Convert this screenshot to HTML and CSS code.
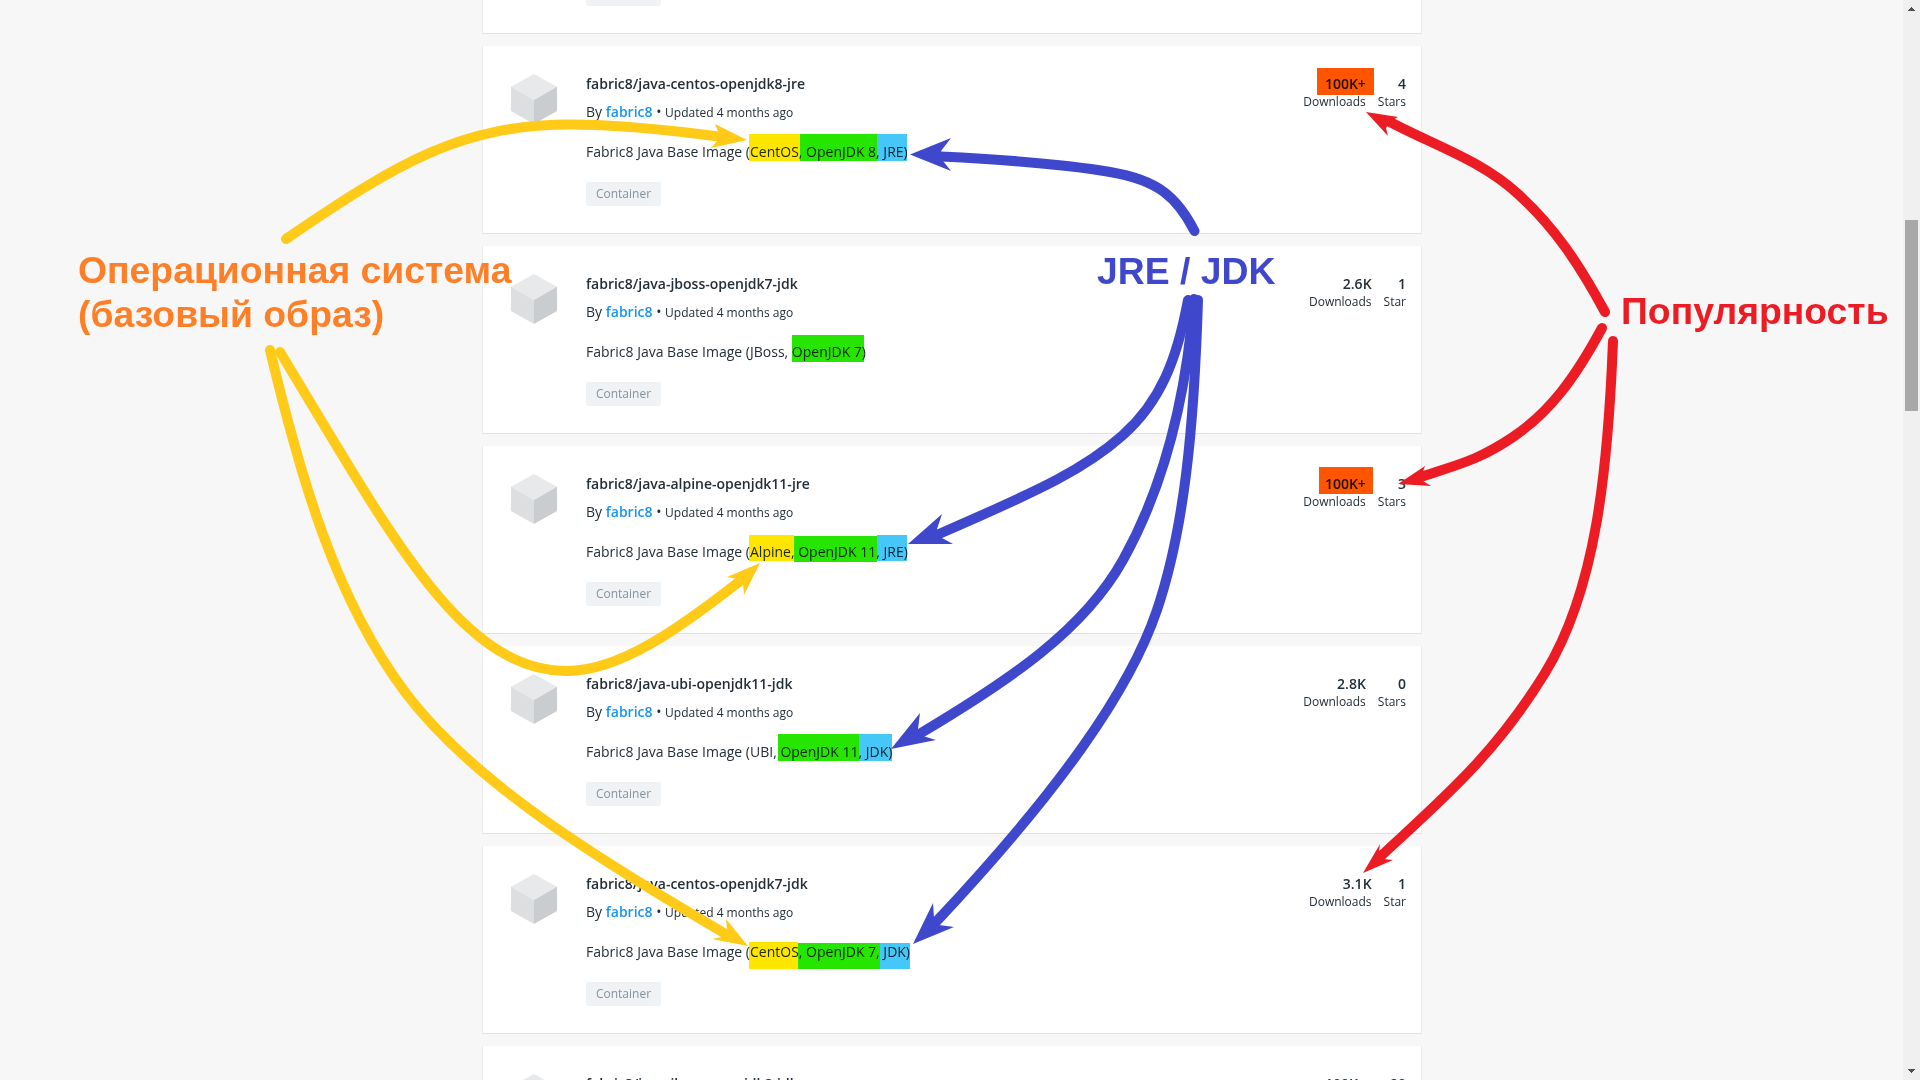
FILE: index.html
```html
<!DOCTYPE html>
<html lang="ru">
<head>
<meta charset="utf-8">
<title>fabric8 java images</title>
<link rel="stylesheet" href="styles.css">
</head>
<body>
<svg width="0" height="0" class="defs">
  <symbol id="cube" viewBox="0 0 46 50">
    <path d="M23 0 46 12.7 23 26 0 12.7z" fill="#e8e9eb"/>
    <path d="M0 12.7 23 26V50L0 37z" fill="#dcdee0"/>
    <path d="M46 12.7 23 26V50L46 37z" fill="#cacdd0"/>
  </symbol>
</svg>
<div class="page">
  <main class="results">
    <article class="card card-end">
      <span class="tag"></span>
    </article>
    <article class="card">
      <svg class="cube"><use href="#cube"/></svg>
      <div class="info">
        <h2 class="title">fabric8/java-centos-openjdk8-jre</h2>
        <p class="by">By <a class="owner">fabric8</a> • <span class="updated">Updated 4 months ago</span></p>
        <p class="desc">Fabric8 Java Base Image (CentOS, OpenJDK 8, JRE)</p>
        <span class="tag">Container</span>
      </div>
      <div class="stats">
        <div class="stat"><b>100K+</b><span>Downloads</span></div>
        <div class="stat"><b>4</b><span>Stars</span></div>
      </div>
    </article>
    <article class="card">
      <svg class="cube"><use href="#cube"/></svg>
      <div class="info">
        <h2 class="title">fabric8/java-jboss-openjdk7-jdk</h2>
        <p class="by">By <a class="owner">fabric8</a> • <span class="updated">Updated 4 months ago</span></p>
        <p class="desc">Fabric8 Java Base Image (JBoss, OpenJDK 7)</p>
        <span class="tag">Container</span>
      </div>
      <div class="stats">
        <div class="stat"><b>2.6K</b><span>Downloads</span></div>
        <div class="stat"><b>1</b><span>Star</span></div>
      </div>
    </article>
    <article class="card">
      <svg class="cube"><use href="#cube"/></svg>
      <div class="info">
        <h2 class="title">fabric8/java-alpine-openjdk11-jre</h2>
        <p class="by">By <a class="owner">fabric8</a> • <span class="updated">Updated 4 months ago</span></p>
        <p class="desc">Fabric8 Java Base Image (Alpine, OpenJDK 11, JRE)</p>
        <span class="tag">Container</span>
      </div>
      <div class="stats">
        <div class="stat"><b>100K+</b><span>Downloads</span></div>
        <div class="stat"><b>3</b><span>Stars</span></div>
      </div>
    </article>
    <article class="card">
      <svg class="cube"><use href="#cube"/></svg>
      <div class="info">
        <h2 class="title">fabric8/java-ubi-openjdk11-jdk</h2>
        <p class="by">By <a class="owner">fabric8</a> • <span class="updated">Updated 4 months ago</span></p>
        <p class="desc">Fabric8 Java Base Image (UBI, OpenJDK 11, JDK)</p>
        <span class="tag">Container</span>
      </div>
      <div class="stats">
        <div class="stat"><b>2.8K</b><span>Downloads</span></div>
        <div class="stat"><b>0</b><span>Stars</span></div>
      </div>
    </article>
    <article class="card">
      <svg class="cube"><use href="#cube"/></svg>
      <div class="info">
        <h2 class="title">fabric8/java-centos-openjdk7-jdk</h2>
        <p class="by">By <a class="owner">fabric8</a> • <span class="updated">Updated 4 months ago</span></p>
        <p class="desc">Fabric8 Java Base Image (CentOS, OpenJDK 7, JDK)</p>
        <span class="tag">Container</span>
      </div>
      <div class="stats">
        <div class="stat"><b>3.1K</b><span>Downloads</span></div>
        <div class="stat"><b>1</b><span>Star</span></div>
      </div>
    </article>
    <article class="card">
      <svg class="cube"><use href="#cube"/></svg>
      <div class="info">
        <h2 class="title">fabric8/java-jboss-openjdk8-jdk</h2>
      </div>
      <div class="stats">
        <div class="stat"><b>100K+</b><span>Downloads</span></div>
        <div class="stat"><b>29</b><span>Stars</span></div>
      </div>
    </article>
  </main>
  <div class="scrollbar">
    <svg class="arrow" width="7" height="4" shape-rendering="crispEdges"><path d="M3 0h1v1h1v1h1v1h1v1H0V3h1V2h1V1h1z"/></svg>
    <div class="thumb"></div>
    <svg class="arrow" width="7" height="4" shape-rendering="crispEdges"><path d="M0 0h7v1H6v1H5v1H4v1H3V3H2V2H1V1H0z"/></svg>
  </div>
</div>

<svg class="overlay marks" viewBox="0 0 1920 1080">
  <g fill="#ffe600">
    <rect x="749" y="134" width="51" height="27"/>
    <rect x="749" y="535" width="45" height="26"/>
    <rect x="749" y="942" width="49" height="27"/>
  </g>
  <g fill="#26e600">
    <rect x="800" y="134" width="77" height="27"/>
    <rect x="792" y="335" width="72" height="27"/>
    <rect x="794" y="536" width="83" height="26"/>
    <rect x="778" y="734" width="81" height="27"/>
    <rect x="798" y="943" width="82" height="26"/>
  </g>
  <g fill="#45c8f7">
    <rect x="877" y="134" width="30" height="27"/>
    <rect x="877" y="535" width="30" height="26"/>
    <rect x="859" y="734" width="33" height="27"/>
    <rect x="880" y="943" width="30" height="26"/>
  </g>
  <g fill="#ff5500">
    <rect x="1317" y="68" width="57" height="27"/>
    <rect x="1319" y="467" width="54" height="27"/>
  </g>
</svg>

<svg class="overlay" viewBox="0 0 1920 1080">
  <g class="yellow">
    <path class="line" d="M286 239C400 161 462 125 570 124.500C620 124.500 670 130 722 137"/>
    <path class="head" d="M747 140 715 124 719 134 720 138 711 148z"/>
    <path class="line" d="M280 352C391 535 461 671 567 671C620 671 680 628 740 581"/>
    <path class="head" d="M760 563 727 577 738 579 743 584 744 595z"/>
    <path class="line" d="M270 350C301 480 336 600 405 692C471 780 591 855 724 933"/>
    <path class="head" d="M748 946 726 919 727 929 722 937 712 939z"/>
  </g>
  <g class="blue">
    <path class="line" d="M1194.500 231C1177 197 1158 180 1110 172C1065 164 1010 160 941 156.500"/>
    <path class="head" d="M910 154.500 951 138 941 151 943 161 951 171z"/>
    <path class="line" d="M1188 300C1177 360 1160 402 1123 435S1045 488 939 534"/>
    <path class="head" d="M908 544 942 514 937 529 942 538 953 544z"/>
    <path class="line" d="M1194 299C1186 400 1162 490 1123 560C1084 630 1010 680 921 733"/>
    <path class="head" d="M891 749 920 713 918 729 923 736 936 740z"/>
    <path class="line" d="M1198 300C1194 430 1184 530 1157 610S1060 790 935 923"/>
    <path class="head" d="M913 944 933 903 934 918 939 925 954 927z"/>
  </g>
  <g class="red">
    <path class="line" d="M1605 312C1578 262 1554 227 1518 194S1440 148 1390 122"/>
    <path class="head" d="M1366 112 1398 117 1391 121 1386 128 1388 136z"/>
    <path class="line" d="M1602 328C1575 378 1550 412 1513 437S1455 465 1421 477"/>
    <path class="head" d="M1398 484 1425 466 1422 474 1423 481 1431 486z"/>
    <path class="line" d="M1613 341C1608 470 1596 590 1545 673S1441 800 1381 856"/>
    <path class="head" d="M1363 873 1380 844 1379 852 1384 859 1393 860z"/>
  </g>
</svg>

<div class="note os">Операционная система<br>(базовый образ)</div>
<div class="note jdk">JRE / JDK</div>
<div class="note pop">Популярность</div>
</body>
</html>
```
FILE: styles.css
```css
* { box-sizing: border-box; }
body {
  margin: 0;
  height: 1080px;
  overflow: hidden;
  position: relative;
  background: #f7f7f7;
  color: #222f38;
  font-family: "Open Sans", "Noto Sans", sans-serif;
}
.defs { position: absolute; }
.page {
  display: flex;
  height: 1080px;
  overflow: hidden;
}
.results {
  display: flex;
  flex-direction: column;
  gap: 12px;
  width: 940px;
  margin: 0 auto 0 482px;
}
.card {
  display: flex;
  flex: none;
  height: 188px;
  padding: 28px 15px 0 28px;
  background: #fff;
  border: 1px solid #ebecee;
  border-top: 0;
  border-bottom-color: #dfe1e3;
}
.card-end { height: 34px; padding: 0 0 0 103px; }
.card-end .tag { height: 6px; border-radius: 0 0 2px 2px; }
.cube { width: 46px; height: 50px; margin-right: 29px; flex: none; }
.info { flex: 1; }
.title {
  margin: 0 0 9px;
  font-size: 14px;
  line-height: 19px;
  font-weight: 600;
}
.by { margin: 0 0 20px; font-size: 14px; line-height: 19px; }
.owner { color: #1a95ec; font-weight: 600; }
.updated { font-size: 12px; }
.desc { margin: 0 0 21px; font-size: 14px; line-height: 19px; }
.tag {
  display: block;
  width: 75px;
  height: 24px;
  border-radius: 2px;
  background: #eff3f6;
  color: #8293a0;
  font-size: 12px;
  line-height: 24px;
  text-align: center;
}
.stats { display: flex; gap: 12px; align-items: flex-start; }
.stat {
  display: flex;
  flex-direction: column;
  align-items: flex-end;
  font-size: 12px;
  line-height: 17px;
}
.stat b { font-size: 14px; line-height: 19px; font-weight: 600; }
.scrollbar {
  display: flex;
  flex-direction: column;
  align-items: center;
  width: 17px;
  padding: 7px 0 7px;
  background: #f0f0f0;
}
.arrow { fill: #505050; flex: none; }
.thumb {
  width: 13px;
  height: 191px;
  margin: 209px 0 auto;
  background: #a8a8a8;
}
.overlay {
  position: absolute;
  left: 0;
  top: 0;
  width: 1920px;
  height: 1080px;
}
.marks { mix-blend-mode: multiply; }
.line { fill: none; stroke-width: 10; stroke-linecap: round; }
.yellow .line { stroke: #ffca18; }
.yellow .head { fill: #ffca18; }
.blue .line { stroke: #3f48cc; }
.blue .head { fill: #3f48cc; }
.red .line { stroke: #ec1c24; }
.red .head { fill: #ec1c24; }
.note {
  position: absolute;
  font: bold 37.33px/44px "Liberation Sans", Arial, sans-serif;
  white-space: nowrap;
}
.os { left: 78px; top: 248px; color: #ff7f27; }
.jdk { left: 1097px; top: 249px; color: #3f48cc; }
.pop { left: 1621px; top: 289px; color: #ec1c24; }
```
